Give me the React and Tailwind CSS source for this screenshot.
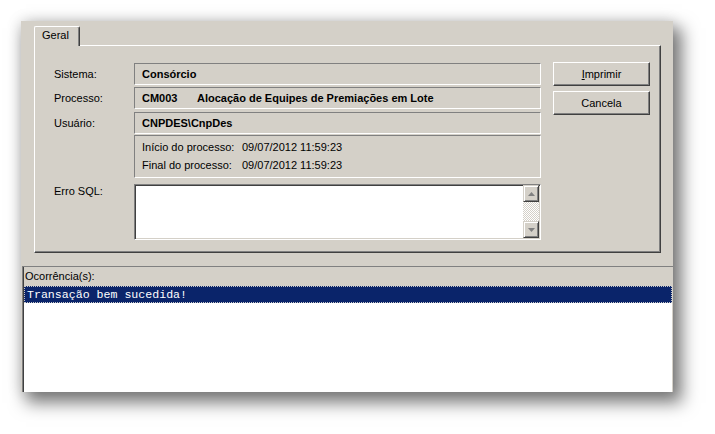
import React from 'react';

// raised / sunken win9x edges
const raised =
  'border border-t-white border-l-white border-r-[#404040] border-b-[#404040] shadow-[inset_-1px_-1px_0_#808080]';
const sunkenThin = 'border border-t-[#808080] border-l-[#808080] border-r-white border-b-white';

function Field({ label, children, className = '' }) {
  return (
    <div className={`flex items-center ${className}`}>
      <div className="w-[80px]">{label}</div>
      <div className={`w-[407px] h-[22px] flex items-center pl-[7px] font-bold ${sunkenThin}`}>{children}</div>
    </div>
  );
}

function ScrollButton({ down }) {
  return (
    <div className="h-[17px] w-[16px] flex items-center justify-center bg-[#d4d0c8] border border-t-[#d4d0c8] border-l-[#d4d0c8] border-r-[#404040] border-b-[#404040] shadow-[inset_1px_1px_0_#fff,inset_-1px_-1px_0_#808080]">
      <svg width="7" height="4" viewBox="0 0 7 4">
        {down ? (
          <polygon points="0,0 7,0 3.5,4" fill="#808080" />
        ) : (
          <polygon points="0,4 7,4 3.5,0" fill="#808080" />
        )}
      </svg>
    </div>
  );
}

export default function App() {
  return (
    <div className="w-[715px] h-[434px] bg-white pl-[21px] pt-[21px] font-['Liberation_Sans',Arial,sans-serif] text-[11px] leading-[13px] text-black">
      <div className="w-[652px] h-[371px] bg-[#d4d0c8] flex flex-col shadow-[7px_9px_16px_2px_rgba(0,0,0,0.5),0_0_14px_rgba(0,0,0,0.14)]">
        {/* Tabs */}
        <div className="pl-[13px] pr-[12px] pt-[5px]">
          <div className="flex">
            <div className="relative z-10 -mb-px h-[20px] w-[46px] bg-[#d4d0c8] border-l border-t border-r border-l-white border-t-white border-r-[#404040] rounded-t-[2px] shadow-[inset_-1px_0_0_#808080] pl-[7px] pt-[2px]">
              Geral
            </div>
          </div>
          <div className={`h-[208px] flex pt-[16px] pl-[19px] ${raised}`}>
            {/* Left column */}
            <div className="flex flex-col pt-[1px]">
              <Field label="Sistema:">Consórcio</Field>
              <Field label="Processo:" className="mt-[2px]">
                <span className="w-[55px]">CM003</span>
                <span>Alocação de Equipes de Premiações em Lote</span>
              </Field>
              <Field label="Usuário:" className="mt-[3px]">CNPDES\CnpDes</Field>
              <div className="flex mt-[1px]">
                <div className="w-[80px]" />
                <div className={`w-[407px] h-[43px] pl-[7px] pt-[2px] leading-[18px] ${sunkenThin}`}>
                  <div className="flex">
                    <span className="w-[100px]">Início do processo:</span>
                    <span>09/07/2012 11:59:23</span>
                  </div>
                  <div className="flex">
                    <span className="w-[100px]">Final do processo:</span>
                    <span>09/07/2012 11:59:23</span>
                  </div>
                </div>
              </div>
              <div className="flex mt-[6px]">
                <div className="w-[80px] pt-[1px]">Erro SQL:</div>
                <div className="w-[407px] h-[56px] bg-white flex justify-end border border-t-[#808080] border-l-[#808080] border-r-white border-b-white shadow-[inset_1px_1px_0_#404040,inset_-1px_-1px_0_#d4d0c8] pr-[1px] pb-[1px]">
                  <div className="flex flex-col w-[16px]">
                    <ScrollButton />
                    <div className="flex-1 bg-[repeating-conic-gradient(#d4d0c8_0%_25%,#ffffff_0%_50%)] bg-[length:2px_2px]" />
                    <ScrollButton down />
                  </div>
                </div>
              </div>
            </div>
            {/* Buttons */}
            <div className="ml-[12px] flex flex-col gap-[5px]">
              <button className={`w-[97px] h-[24px] bg-[#d4d0c8] flex items-center justify-center ${raised}`}>
                <span>
                  <span className="underline">I</span>mprimir
                </span>
              </button>
              <button className={`w-[97px] h-[24px] bg-[#d4d0c8] flex items-center justify-center ${raised}`}>
                Cancela
              </button>
            </div>
          </div>
        </div>

        {/* Ocorrências */}
        <div className="mt-[13px] ml-[1px] flex-1 flex border-t border-l border-[#808080]">
          <div className="flex-1 flex flex-col border-l border-l-[#404040] border-r border-r-[#d4d0c8]">
            <div className="h-[19px] flex items-center pl-[1px]">Ocorrência(s):</div>
            <div className="flex-1 bg-white">
              <div className="h-[17px] bg-[#0a246a] border border-dotted border-[#c8c8c8] pl-[2px] flex items-center text-white font-['Liberation_Mono','Courier_New',monospace] text-[11.6px]">
                Transação bem sucedida!
              </div>
            </div>
          </div>
        </div>
      </div>
    </div>
  );
}
